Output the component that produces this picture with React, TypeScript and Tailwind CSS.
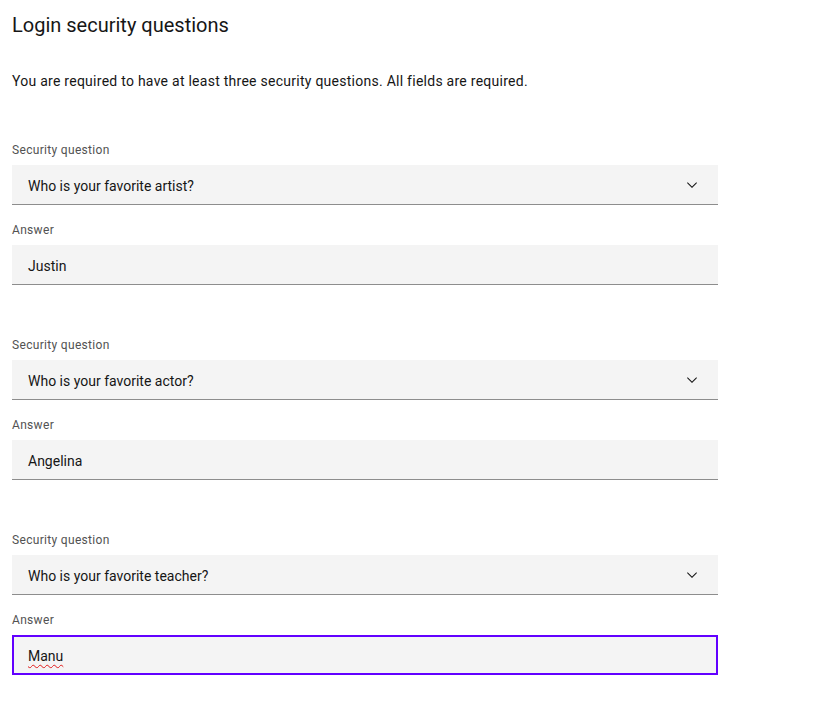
import React from "react";

const Chevron = () => (
  <svg width="16" height="16" viewBox="0 0 16 16" fill="#161616" aria-hidden="true">
    <path d="M8 11L3 6 3.7 5.3 8 9.6 12.3 5.3 13 6z" />
  </svg>
);

const Label = ({ children }: { children: React.ReactNode }) => (
  <div className="pt-[1px] text-[12px] leading-[16px] tracking-[0.32px] text-[#525252] mb-[7px]">{children}</div>
);

const Group = ({ q, a, focused }: { q: string; a: string; focused?: boolean }) => (
  <div className="w-[706px]">
    <Label>Security question</Label>
    <div className="h-10 bg-[#f4f4f4] border-b border-[#8d8d8d] flex items-center justify-between pl-4 pr-[18px] pt-[3px] text-[14px] text-[#161616]">
      <span>{q}</span>
      <span className="-mt-[3px]">
        <Chevron />
      </span>
    </div>
    <div className="mt-4">
      <Label>Answer</Label>
      {focused ? (
        <div className="h-10 bg-[#f4f4f4] outline-2 outline-[#6200ff] -outline-offset-2 flex items-center pl-4 pt-[2px] text-[14px] text-[#161616]">
          <span className="underline decoration-wavy decoration-[#e01b1b] decoration-1 underline-offset-[3px]">{a}</span>
        </div>
      ) : (
        <div className="h-10 bg-[#f4f4f4] border-b border-[#8d8d8d] flex items-center pl-4 pt-[3px] text-[14px] text-[#161616]">
          {a}
        </div>
      )}
    </div>
  </div>
);

export default function App() {
  return (
    <div className="min-h-[723px] bg-white px-3 text-[#161616]" style={{ fontFamily: "Roboto, 'Noto Sans', sans-serif" }}>
      <h1 className="pt-[11px] text-[20px] leading-[28px] font-normal">Login security questions</h1>
      <p className="mt-[32px] text-[14px] leading-[20px] tracking-[0.26px]">
        You are required to have at least three security questions. All fields are required.
      </p>
      <div className="mt-[50px] flex flex-col gap-[51px]">
        <Group q="Who is your favorite artist?" a="Justin" />
        <Group q="Who is your favorite actor?" a="Angelina" />
        <Group q="Who is your favorite teacher?" a="Manu" focused />
      </div>
    </div>
  );
}
